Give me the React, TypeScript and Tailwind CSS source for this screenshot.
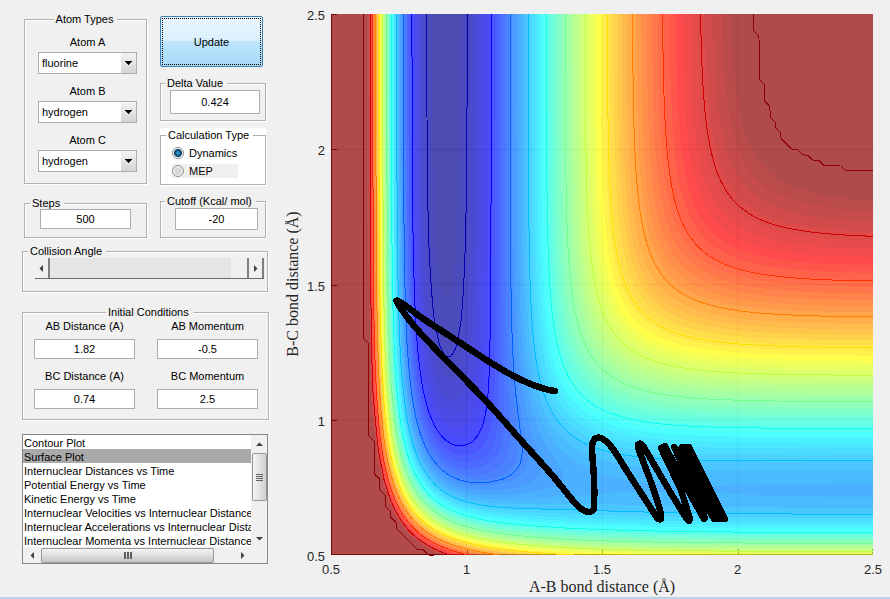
import React from "react";
import type { ReactNode } from "react";

/* ---------- LEPS potential energy surface ---------- */

const CUTOFF = -20.9;
const V_MIN = -141.1;
const LEVELS = 64;
const TOP_LEVEL = 62;
const GRID = 101;
const STEP = 0.02;
const R_MIN = 0.5;

const HF = { d: 141.2, b: 2.2798, re: 0.9211, s: 0.176 };
const HH = { d: 109.6137, b: 2.0017, re: 0.7389, s: 0.1807 };

function morseTerms(r: number, m: typeof HF): [number, number] {
  const x = Math.exp(-m.b * (r - m.re));
  const singlet = m.d * (x * x - 2 * x);
  const triplet = (m.d / 2) * (x * x + 2 * x) * ((1 - m.s) / (1 + m.s));
  return [(singlet + triplet) / 2, (singlet - triplet) / 2];
}

function energy(ab: number, bc: number): number {
  const [q1, j1] = morseTerms(ab, HF);
  const [q2, j2] = morseTerms(bc, HH);
  const [q3, j3] = morseTerms(ab + bc, HF);
  const v = q1 + q2 + q3 - Math.sqrt(0.5 * ((j1 - j2) ** 2 + (j2 - j3) ** 2 + (j3 - j1) ** 2));
  return Math.min(v, CUTOFF);
}

/* surface[j][i]: energy at A-B = R_MIN + i*STEP, B-C = R_MIN + j*STEP */
const surface: number[][] = Array.from({ length: GRID }, (_, j) =>
  Array.from({ length: GRID }, (_, i) => energy(R_MIN + i * STEP, R_MIN + j * STEP)),
);

function sample(u: number, w: number): number {
  const i = Math.min(GRID - 2, Math.floor(u));
  const j = Math.min(GRID - 2, Math.floor(w));
  const fu = u - i;
  const fw = w - j;
  return (
    (surface[j][i] * (1 - fu) + surface[j][i + 1] * fu) * (1 - fw) +
    (surface[j + 1][i] * (1 - fu) + surface[j + 1][i + 1] * fu) * fw
  );
}

const clamp01 = (v: number) => Math.max(0, Math.min(1, v));

function jet(index: number): string {
  const t = 4 * ((index + 1) / LEVELS);
  const channel = (c: number) => Math.round(255 * clamp01(1.5 - Math.abs(t - c)));
  return `rgb(${channel(3)},${channel(2)},${channel(1)})`;
}

const levelOf = (v: number) =>
  Math.max(0, Math.min(TOP_LEVEL, Math.floor(((v - V_MIN) / (CUTOFF - V_MIN)) * LEVELS)));

/* ---------- plot geometry ---------- */

const PLOT = { x: 46, y: 14, w: 542, h: 541 };
const toX = (i: number) => PLOT.x + (i / (GRID - 1)) * PLOT.w;
const toY = (j: number) => PLOT.y + PLOT.h - (j / (GRID - 1)) * PLOT.h;

function fillBands(): string[] {
  const bands: string[] = Array.from({ length: LEVELS }, () => "");
  for (let y = 0; y < PLOT.h; y++) {
    const w = ((PLOT.h - y - 0.5) / PLOT.h) * (GRID - 1);
    let start = 0;
    let current = -1;
    for (let x = 0; x <= PLOT.w; x++) {
      const level = x < PLOT.w ? levelOf(sample(((x + 0.5) / PLOT.w) * (GRID - 1), w)) : -2;
      if (level !== current) {
        if (current >= 0) bands[current] += `M${PLOT.x + start} ${PLOT.y + y}h${x - start}v1h${start - x}z`;
        start = x;
        current = level;
      }
    }
  }
  return bands;
}

function contour(level: number): string {
  let d = "";
  for (let j = 0; j < GRID - 1; j++) {
    for (let i = 0; i < GRID - 1; i++) {
      const corners: [number, number, number][] = [
        [i, j, surface[j][i]],
        [i + 1, j, surface[j][i + 1]],
        [i + 1, j + 1, surface[j + 1][i + 1]],
        [i, j + 1, surface[j + 1][i]],
      ];
      const hits: string[] = [];
      for (let k = 0; k < 4; k++) {
        const a = corners[k];
        const b = corners[(k + 1) % 4];
        if (a[2] > level !== b[2] > level) {
          const t = (level - a[2]) / (b[2] - a[2]);
          hits.push(`${toX(a[0] + t * (b[0] - a[0])).toFixed(2)} ${toY(a[1] + t * (b[1] - a[1])).toFixed(2)}`);
        }
      }
      for (let k = 0; k + 1 < hits.length; k += 2) d += `M${hits[k]}L${hits[k + 1]}`;
    }
  }
  return d;
}

const bands = fillBands();
const contours = Array.from({ length: 12 }, (_, k) => {
  const level = k === 0 ? CUTOFF - 0.001 : -20.66 - 10.577 * k;
  return { d: contour(level), color: jet(levelOf(level)) };
});

/* smooth curve through a list of points */
function spline(p: number[][]): string {
  let d = `M${p[0][0]} ${p[0][1]}`;
  for (let i = 0; i < p.length - 1; i++) {
    const a = p[Math.max(0, i - 1)];
    const b = p[i];
    const c = p[i + 1];
    const e = p[Math.min(p.length - 1, i + 2)];
    d += `C${b[0] + (c[0] - a[0]) / 6} ${b[1] + (c[1] - a[1]) / 6} ${c[0] - (e[0] - b[0]) / 6} ${c[1] - (e[1] - b[1]) / 6} ${c[0]} ${c[1]}`;
  }
  return d;
}

const approach = spline([
  [270, 391], [260, 389], [243, 383], [223, 373], [203, 361], [180, 346], [157, 331], [137, 318], [121, 306],
  [113, 301], [113, 304], [130, 327], [163, 362], [200, 400], [233, 437], [267, 475], [290, 503], [300, 511],
  [307, 511], [309, 505], [309, 478], [307, 450], [308, 442], [311, 438], [318, 439], [328, 449], [340, 468],
  [369, 513], [374, 519], [376, 518], [375, 510], [367, 485], [354, 450], [354, 444], [358, 446], [367, 461],
  [387, 495], [402, 519], [405, 519],
]);
const vibration =
  "M405 519L396 490L376 448L380 446L400 485L419 519L420 518L405 480L389 447L394 453L412 490L429 519L432 519L412 475L397 447L401 447L420 490L435 519L438 519L418 475L400 447M404 447L440 519";
const overlap = "M380 449L420 519L409 489L428 520L441 520L404 446L398 446L391 463z";

const TICKS = [0.5, 1, 1.5, 2, 2.5];

function EnergyPlot() {
  return (
    <svg viewBox="0 0 605 597" className="block w-full" role="img" aria-label="Contour plot of bond distances">
      <rect x={PLOT.x} y={PLOT.y} width={PLOT.w} height={PLOT.h} fill="#fff" />
      <g shapeRendering="crispEdges" stroke="#262626" fill="none">
        {TICKS.slice(1, 4).map((t) => {
          const i = (t - R_MIN) / STEP;
          return <path key={t} strokeOpacity="0.15" d={`M${toX(i)} 14V555M46 ${toY(i)}H588`} />;
        })}
        <path d="M46.5 14V554.5H588" />
        {TICKS.map((t) => {
          const i = (t - R_MIN) / STEP;
          const x = Math.min(587.5, toX(i) + 0.5);
          const y = Math.min(554.5, toY(i) + 0.5);
          return <path key={t} d={`M${x} 549V555M46 ${y}H52`} />;
        })}
      </g>
      <g shapeRendering="crispEdges" opacity="0.7">
        {bands.map((d, i) => (
          <path key={i} d={d} fill={jet(i)} />
        ))}
      </g>
      <g shapeRendering="crispEdges" fill="none" strokeWidth="1">
        {contours.map((c, i) => (
          <path key={i} d={c.d} stroke={c.color} />
        ))}
      </g>
      <g shapeRendering="crispEdges" fill="none" stroke="#000" strokeWidth="6.5" strokeLinejoin="round" strokeLinecap="round">
        <path d={approach} />
        <path d={vibration} />
        <path d={overlap} fill="#000" stroke="none" />
      </g>
      <g className="font-['Liberation_Sans',Arial,sans-serif] text-[13px]" fill="#262626">
        {TICKS.map((t) => {
          const i = (t - R_MIN) / STEP;
          return (
            <g key={t}>
              <text x={toX(i)} y="574" textAnchor="middle">{t}</text>
              <text x="40" y={toY(i) + 6} textAnchor="end">{t}</text>
            </g>
          );
        })}
      </g>
      <g className="font-['Liberation_Serif','Times_New_Roman',serif] text-[16px]" fill="#262626" textAnchor="middle">
        <text x="317" y="592">A-B bond distance (Å)</text>
        <text transform="translate(13 284) rotate(-90)">B-C bond distance (Å)</text>
      </g>
    </svg>
  );
}

/* ---------- form pieces ---------- */

const etched = "min-w-0 border border-[#b0b0b0] shadow-[1px_1px_0_#fff,inset_1px_1px_0_#fff]";

function Panel({ title, className = "", legend = "ml-1 bg-[#f0f0f0]", children }: {
  title: string;
  className?: string;
  legend?: string;
  children: ReactNode;
}) {
  return (
    <fieldset className={`${etched} ${className}`}>
      <legend className={`${legend} whitespace-nowrap pl-[2px] pr-1 leading-[14px]`}>{title}</legend>
      {children}
    </fieldset>
  );
}

function NumberBox({ label, value, className = "" }: { label: string; value: string; className?: string }) {
  return (
    <input
      aria-label={label}
      defaultValue={value}
      className={`block border border-[#abadb3] bg-white text-center leading-[14px] outline-none ${className}`}
    />
  );
}

function AtomSelect({ id, label, value }: { id: string; label: string; value: string }) {
  return (
    <div className="flex flex-col items-center gap-[3px]">
      <label htmlFor={id} className="leading-[14px]">{label}</label>
      <div className="grid h-[22px] w-[99px] border border-[#abadb3] bg-white">
        <select id={id} defaultValue={value} className="col-start-1 row-start-1 appearance-none bg-transparent pl-[3px] outline-none">
          <option>fluorine</option>
          <option>hydrogen</option>
          <option>chlorine</option>
        </select>
        <span className="pointer-events-none col-start-1 row-start-1 flex w-[15px] items-center justify-center justify-self-end bg-linear-to-b from-[#f4f4f4] to-[#d4d4d4]">
          <svg width="7" height="4" viewBox="0 0 7 4" shapeRendering="crispEdges"><path d="M0 0h7v1h-1v1h-1v1h-1v1h-1v-1h-1v-1h-1v-1h-1z" /></svg>
        </span>
      </div>
    </div>
  );
}

function Condition({ id, label, value }: { id: string; label: string; value: string }) {
  return (
    <div className="flex flex-col items-center gap-[6px]">
      <label htmlFor={id} className="leading-[14px]">{label}</label>
      <input id={id} defaultValue={value} className="h-5 w-full border border-[#abadb3] bg-white text-center outline-none" />
    </div>
  );
}

function CalcOption({ label, checked, className = "" }: { label: string; checked?: boolean; className?: string }) {
  return (
    <label className={`flex h-[14px] w-[66px] items-center gap-[5px] whitespace-nowrap ${className}`}>
      <input
        type="radio"
        name="calculation"
        defaultChecked={checked}
        className="size-3 shrink-0 appearance-none rounded-full border border-[#8e8f8f] bg-[radial-gradient(circle,#d8d8d8_40%,#fafafa_75%)] checked:bg-[radial-gradient(circle,#2f9ad0_12%,#0d4468_42%,#0d4468_50%,#f4f4f4_62%)]"
      />
      {label}
    </label>
  );
}

const stepButton = "flex h-5 w-[15px] items-center justify-center border-r-2 border-[#808080] bg-[#f0f0f0]";

const plots = [
  "Contour Plot",
  "Surface Plot",
  "Internuclear Distances vs Time",
  "Potential Energy vs Time",
  "Kinetic Energy vs Time",
  "Internuclear Velocities vs Internuclear Distance",
  "Internuclear Accelerations vs Internuclear Distance",
  "Internuclear Momenta vs Internuclear Distance",
];

function Arrow({ d }: { d: string }) {
  return <svg width="7" height="7" viewBox="0 0 7 7" aria-hidden="true"><path d={d} fill="#404040" /></svg>;
}

const UP = "M0 5L3.5 1.5L7 5z";
const DOWN = "M0 2L3.5 5.5L7 2z";
const LEFT = "M5 0L1.5 3.5L5 7z";
const RIGHT = "M2 0L5.5 3.5L2 7z";

function PlotList() {
  return (
    <div className="grid h-[130px] w-[246px] grid-cols-[228px_16px] grid-rows-[112px_16px] border border-[#828790] bg-white">
      <select size={8} defaultValue="Surface Plot" aria-label="Plot type" className="overflow-hidden bg-white outline-none [scrollbar-width:none]">
        {plots.map((p) => (
          <option
            key={p}
            className="h-[14px] min-h-0 overflow-hidden whitespace-pre p-0 pl-px pt-[2px] leading-[14px] text-black checked:bg-[#a9a9a9] checked:bg-linear-to-r checked:from-[#a9a9a9] checked:to-[#a9a9a9]"
          >
            {p}
          </option>
        ))}
      </select>
      <div className="flex flex-col items-center bg-[#f0f0f0]">
        <button aria-label="Scroll up" className="flex h-[18px] w-full items-center justify-center"><Arrow d={UP} /></button>
        <div className="flex h-12 w-[15px] items-center justify-center rounded-[2px] border border-[#979797] bg-linear-to-r from-[#f5f5f5] to-[#cfcfcf]">
          <span className="h-[7px] w-[7px] bg-[repeating-linear-gradient(to_bottom,#606060_0_1px,transparent_1px_2px)]" />
        </div>
        <div className="flex-1" />
        <button aria-label="Scroll down" className="flex h-[18px] w-full items-center justify-center"><Arrow d={DOWN} /></button>
      </div>
      <div className="flex items-center bg-[#f0f0f0]">
        <button aria-label="Scroll left" className="flex h-full w-[18px] items-center justify-center"><Arrow d={LEFT} /></button>
        <div className="flex h-[15px] w-[173px] items-center justify-center rounded-[2px] border border-[#979797] bg-linear-to-b from-[#f5f5f5] to-[#c6c6c6]">
          <span className="h-[7px] w-[8px] bg-[repeating-linear-gradient(to_right,#606060_0_2px,transparent_2px_3px)]" />
        </div>
        <div className="flex-1" />
        <button aria-label="Scroll right" className="flex h-full w-[18px] items-center justify-center"><Arrow d={RIGHT} /></button>
      </div>
      <div className="bg-[#f0f0f0]" />
    </div>
  );
}

export default function App() {
  return (
    <div className="flex min-h-screen flex-col border-b-2 border-[#b9d1ea] bg-[#f0f0f0] font-['Liberation_Sans',Arial,sans-serif] text-[11px] leading-[14px] text-black">
      <div className="flex items-start">
        <div className="w-[285px] shrink-0 pl-[22px]">
          <div className="flex gap-[13px] pl-[2px] pt-3">
            <div className="w-[123px]">
              <Panel title="Atom Types" className="h-[172px]" legend="mx-auto bg-[#f0f0f0]">
                <div className="flex flex-col gap-[10px] pl-1 pt-[9px]">
                  <AtomSelect id="atom-a" label="Atom A" value="fluorine" />
                  <AtomSelect id="atom-b" label="Atom B" value="hydrogen" />
                  <AtomSelect id="atom-c" label="Atom C" value="hydrogen" />
                </div>
              </Panel>
              <Panel title="Steps" className="mt-3 h-[42px]" legend="ml-[5px] bg-[#f0f0f0]">
                <NumberBox label="Steps" value="500" className="mx-auto -mt-px h-5 w-[91px]" />
              </Panel>
            </div>
            <div className="w-[106px] pt-1">
              <button className="block h-[51px] w-[103px] rounded-[2px] border border-[#3c7fb1] bg-[linear-gradient(#eaf6fd,#d9f0fc_49%,#bee6fd_50%,#a7d9f5)] p-px">
                <span className="flex h-full items-center justify-center border border-dotted border-black">Update</span>
              </button>
              <Panel title="Delta Value" className="mt-[9px] h-[45px]">
                <NumberBox label="Delta Value" value="0.424" className="ml-[9px] h-6 w-[90px]" />
              </Panel>
              <div className="mt-[7px] bg-white">
                <Panel title="Calculation Type" className="h-[57px]" legend="ml-[5px] bg-white">
                  <div className="flex flex-col gap-1 pl-[11px] pt-1">
                    <CalcOption label="Dynamics" checked />
                    <CalcOption label="MEP" className="bg-[#f0f0f0]" />
                  </div>
                </Panel>
              </div>
              <Panel title="Cutoff (Kcal/ mol)" className="mt-[9px] h-[44px]">
                <NumberBox label="Cutoff" value="-20" className="ml-[14px] h-[22px] w-[83px]" />
              </Panel>
            </div>
          </div>

          <Panel title="Collision Angle" className="mt-[6px] h-[48px] w-[246px]" legend="ml-[5px] bg-[#f0f0f0]">
            <div className="ml-3 flex w-[229px] border-b border-[#696969]">
              <button aria-label="Decrease angle" className={stepButton}><Arrow d={LEFT} /></button>
              <input
                type="range"
                aria-label="Collision Angle"
                min={0}
                max={180}
                defaultValue={180}
                className="h-5 min-w-0 flex-1 appearance-none bg-[#e5e5e5] [&::-webkit-slider-thumb]:h-5 [&::-webkit-slider-thumb]:w-[18px] [&::-webkit-slider-thumb]:appearance-none [&::-webkit-slider-thumb]:border-r-2 [&::-webkit-slider-thumb]:border-[#808080] [&::-webkit-slider-thumb]:bg-[#f0f0f0]"
              />
              <button aria-label="Increase angle" className={stepButton}><Arrow d={RIGHT} /></button>
            </div>
          </Panel>

          <Panel title="Initial Conditions" className="mt-[13px] h-[115px] w-[247px]" legend="ml-[83px] bg-[#f0f0f0]">
            <div className="grid grid-cols-[101px_101px] gap-x-[22px] gap-y-[10px] pl-[11px]">
              <Condition id="ab-distance" label="AB Distance (A)" value="1.82" />
              <Condition id="ab-momentum" label="AB Momentum" value="-0.5" />
              <Condition id="bc-distance" label="BC Distance (A)" value="0.74" />
              <Condition id="bc-momentum" label="BC Momentum" value="2.5" />
            </div>
          </Panel>

          <div className="mt-[14px]">
            <PlotList />
          </div>
        </div>
        <div className="min-w-0 flex-1">
          <EnergyPlot />
        </div>
      </div>
    </div>
  );
}
